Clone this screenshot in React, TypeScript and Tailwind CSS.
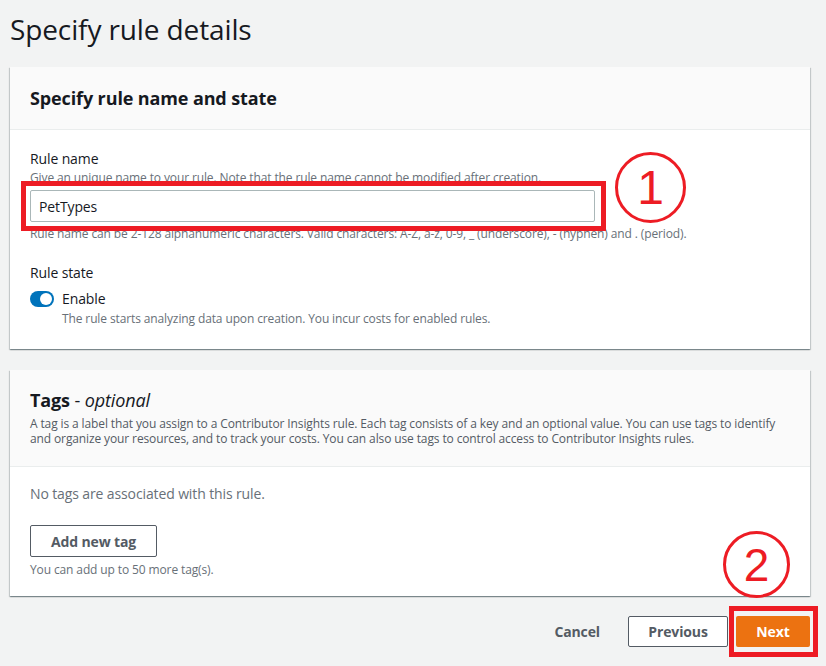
import React from 'react';

const FONT = "font-['Open_Sans',Roboto,sans-serif] tracking-[-0.12px]";

function Card({ children }: { children: React.ReactNode }) {
  return (
    <div className="bg-white shadow-[0_1px_1px_0_rgba(0,28,36,0.3),1px_1px_1px_0_rgba(0,28,36,0.15),-1px_1px_1px_0_rgba(0,28,36,0.15)]">
      {children}
    </div>
  );
}

function Annotation({ n, className }: { n: string; className: string }) {
  return (
    <div
      className={`absolute flex items-center justify-center rounded-full border-[3px] border-[#ed1c24] text-[#ed1c24] font-['Liberation_Sans',sans-serif] font-light leading-none ${className}`}
    >
      {n}
    </div>
  );
}

export default function App() {
  return (
    <div className={`relative min-h-[666px] w-[826px] bg-[#f2f3f3] pl-[10px] pr-[16px] ${FONT} text-[#16191f]`}>
      <h1 className="pt-[11px] text-[28px] leading-[36px] font-normal">Specify rule details</h1>

      {/* Rule name and state */}
      <div className="mt-[20px]">
        <Card>
          <div className="bg-[#fafafa] border-b border-[#eaeded] px-[20px] h-[63px] flex items-center">
            <h2 className="text-[18px] leading-[24px] font-bold">Specify rule name and state</h2>
          </div>
          <div className="px-[20px] pt-[18px] pb-[22px]">
            <div className="text-[14px] leading-[22px]">Rule name</div>
            <div className="text-[12px] leading-[16px] text-[#687078]">
              Give an unique name to your rule. Note that the rule name cannot be modified after creation.
            </div>
            <div className="relative mt-[4px] w-[565px]">
              <input
                readOnly
                value="PetTypes"
                className="block w-full h-[32px] border border-[#aab7b8] rounded-[2px] px-[8px] text-[14px] text-[#16191f] outline-none bg-white"
              />
              <div className="absolute -left-[9px] -top-[9px] -right-[11px] -bottom-[9px] border-[5px] border-[#ed1c24] pointer-events-none" />
            </div>
            <div className="mt-[4px] text-[12px] leading-[16px] text-[#687078]">
              Rule name can be 2-128 alphanumeric characters. Valid characters: A-Z, a-z, 0-9, _ (underscore), - (hyphen) and . (period).
            </div>

            <div className="mt-[20px] text-[14px] leading-[22px]">Rule state</div>
            <div className="mt-[4px] flex items-center gap-[8px]">
              <div className="w-[24px] h-[16px] rounded-full bg-[#0073bb] flex items-center justify-end pr-[2px]">
                <div className="w-[12px] h-[12px] rounded-full bg-white" />
              </div>
              <span className="text-[14px] leading-[22px]">Enable</span>
            </div>
            <div className="mt-[1px] pl-[32px] text-[12px] leading-[16px] text-[#687078]">
              The rule starts analyzing data upon creation. You incur costs for enabled rules.
            </div>
          </div>
        </Card>
      </div>

      {/* Tags */}
      <div className="mt-[21px]">
        <Card>
          <div className="bg-[#fafafa] border-b border-[#eaeded] px-[20px] pt-[18px] pb-[20px]">
            <h2 className="text-[18px] leading-[24px] font-bold">
              Tags <span className="font-normal">-</span> <i className="font-normal">optional</i>
            </h2>
            <p className="mt-[4px] text-[12px] leading-[15px] text-[#545b64]">
              A tag is a label that you assign to a Contributor Insights rule. Each tag consists of a key and an optional value. You can use tags to identify and organize your resources, and to track your costs. You can also use tags to control access to Contributor Insights rules.
            </p>
          </div>
          <div className="px-[20px] pt-[16px] pb-[18px]">
            <div className="text-[14px] leading-[22px] text-[#687078]">No tags are associated with this rule.</div>
            <button className="mt-[20px] h-[32px] w-[127px] border border-[#545b64] rounded-[2px] bg-white text-[14px] font-bold text-[#545b64]">
              Add new tag
            </button>
            <div className="mt-[5px] text-[12px] leading-[16px] text-[#687078]">You can add up to 50 more tag(s).</div>
          </div>
        </Card>
      </div>

      {/* Footer actions */}
      <div className="mt-[20px] flex justify-end items-center gap-[8px] pb-[18px]">
        <button className="h-[31px] px-[20px] text-[14px] font-bold text-[#545b64]">Cancel</button>
        <button className="h-[31px] w-[100px] border border-[#545b64] rounded-[2px] bg-white text-[14px] font-bold text-[#545b64]">
          Previous
        </button>
        <div className="relative">
          <button className="h-[31px] w-[74px] rounded-[2px] bg-[#ec7211] text-[14px] font-bold text-white">Next</button>
          <div className="absolute -left-[7px] -top-[10px] -right-[8px] -bottom-[10px] border-[5px] border-[#ed1c24] pointer-events-none" />
        </div>
      </div>

      <Annotation n="1" className="left-[615px] top-[152px] w-[71px] h-[71px] text-[48px]" />
      <Annotation n="2" className="left-[723px] top-[531px] w-[67px] h-[67px] text-[46px]" />
    </div>
  );
}
